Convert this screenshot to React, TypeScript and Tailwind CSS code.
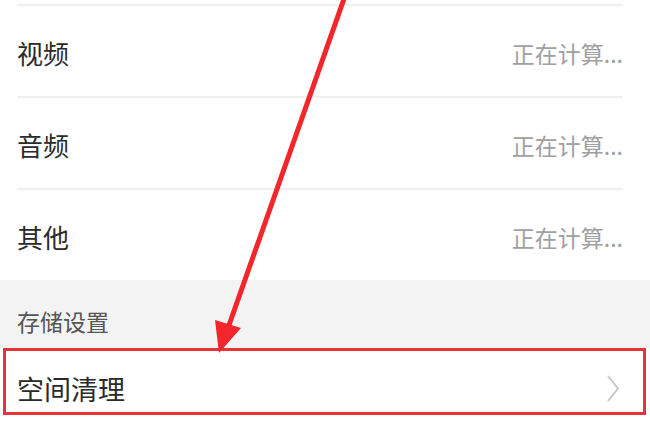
const rows = ["视频", "音频", "其他"];

const Arrow = () => (
  <svg
    className="absolute left-0 top-0 pointer-events-none"
    width="650"
    height="433"
    viewBox="0 0 650 433"
  >
    <line x1="345" y1="-4" x2="228" y2="328" stroke="#f2262b" strokeWidth="5" />
    <polygon points="219,353 215,320 241,328" fill="#f2262b" />
  </svg>
);

export default function App() {
  return (
    <div
      className="relative w-[650px] h-[433px] overflow-hidden bg-white"
      style={{ fontFamily: '"Noto Sans CJK SC", "Noto Sans", sans-serif' }}
    >
      <div className="h-[4px]" />
      {rows.map((r) => (
        <div
          key={r}
          className="ml-[17px] mr-[27px] h-[92px] border-t-2 border-[#f0f0f0] flex items-center justify-between pt-[4px]"
        >
          <span className="text-[26px] text-[#2a2a2a] leading-none">{r}</span>
          <span className="text-[23px] text-[#a0a0a0] leading-none">正在计算...</span>
        </div>
      ))}
      <div className="h-[68px] bg-[#f3f3f3] flex items-center pl-[17px] pt-[14px]">
        <span className="text-[23px] text-[#555555] leading-none">存储设置</span>
      </div>
      <div className="ml-[3px] mr-[4px] h-[67px] border-[3px] border-[#e8323a] flex items-center justify-between pl-[11px] pr-[23px] pt-[14px]">
        <span className="text-[27px] text-[#2a2a2a] leading-none">空间清理</span>
        <svg width="14" height="27" viewBox="0 0 14 27">
          <polyline points="2,1 12,13.5 2,26" fill="none" stroke="#c8c8c8" strokeWidth="2" />
        </svg>
      </div>
      <Arrow />
    </div>
  );
}
